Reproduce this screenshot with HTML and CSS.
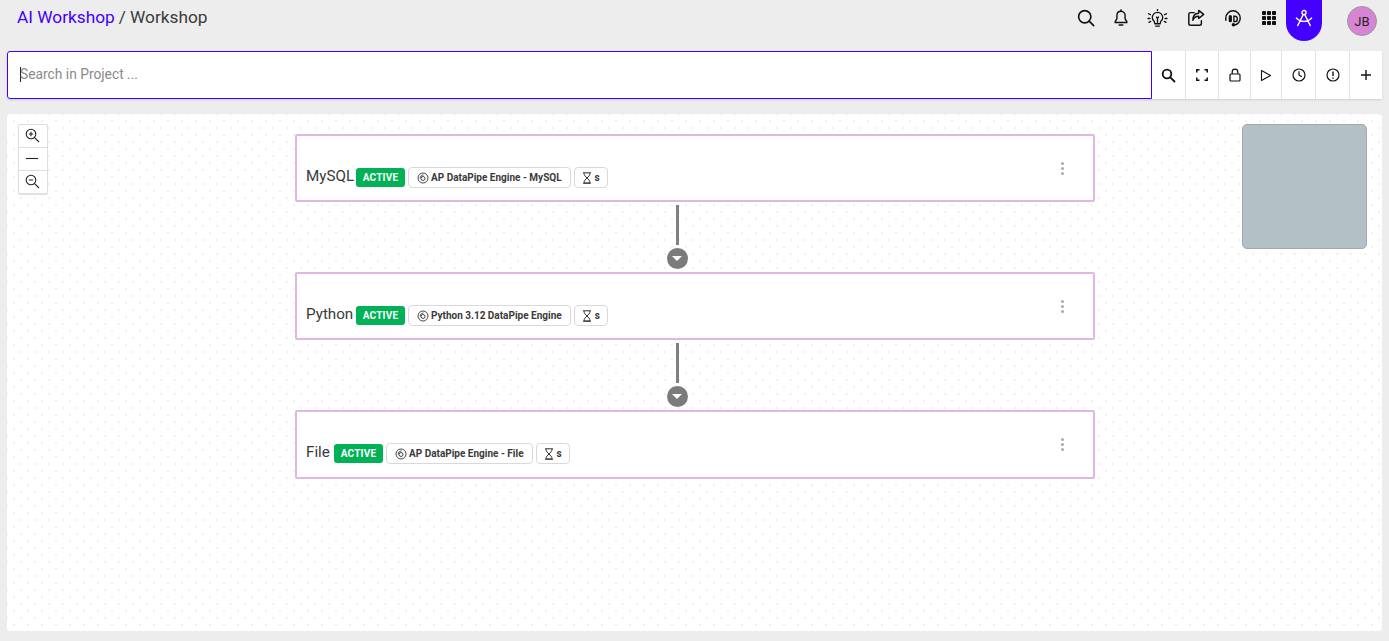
FILE: index.html
```html
<!DOCTYPE html>
<html lang="en">
<head>
<meta charset="utf-8">
<title>AI Workshop</title>
<link rel="stylesheet" href="styles.css">
</head>
<body>
<header class="topbar">
  <div class="crumbs"><a class="crumb-link">AI Workshop</a><span class="crumb-sep">/</span><span>Workshop</span></div>
  <nav class="top-icons">
    <span class="ti ti-search"><svg width="18" height="18" viewBox="0 0 20 20" fill="none" stroke="#111" stroke-width="1.800"><circle cx="8.600" cy="8.600" r="6.800"/><path d="M13.500 13.500l5 5" stroke-linecap="round"/></svg></span>
    <span class="ti ti-bell"><svg width="16" height="18" viewBox="0 0 18 20" fill="none" stroke="#111" stroke-width="1.600"><path d="M9 2.500c-3 0-4.600 2.200-4.600 5v3.500L2.500 14v1h13v-1l-1.900-3V7.500c0-2.800-1.600-5-4.600-5z"/><path d="M9 1v1.500M7 17.800h4" stroke-linecap="round" stroke-width="1.800"/></svg></span>
    <span class="ti ti-bulb"><svg width="21" height="19" viewBox="0 0 22 20" fill="none" stroke="#111" stroke-width="1.400"><path d="M7.500 13c-1.200-1-2-2.400-2-4 0-3 2.400-5.500 5.500-5.500s5.500 2.500 5.500 5.500c0 1.600-.8 3-2 4l-.8 2.500H8.300z"/><path d="M9 18h4M10 8.500l1 1.500 1-1.500M11 10v4M1.500 5l2 1M1 10h2M2 14l1.800-1M20.500 5l-2 1M21 10h-2M20 14l-1.800-1M11 .5v1" stroke-linecap="round"/></svg></span>
    <span class="ti ti-share"><svg width="18" height="18" viewBox="0 0 20 20" fill="none" stroke="#111" stroke-width="1.600"><path d="M8 4H4a2 2 0 0 0-2 2v10a2 2 0 0 0 2 2h10a2 2 0 0 0 2-2v-3" stroke-linecap="round"/><path d="M13 1.500l5.500 4.500-5.500 4.500V8c-3.500 0-5.500 1.500-6.500 4.500 0-4.500 2.500-7.500 6.500-7.700z" stroke-linejoin="round"/></svg></span>
    <span class="ti ti-head"><svg width="18" height="18" viewBox="0 0 20 20" fill="none" stroke="#111" stroke-width="1.600"><path d="M2 13V10a8 8 0 0 1 16 0c0 3.500-1.500 6-5 7.500H11"/><rect x="6" y="7.500" width="2" height="6.500" rx="1" fill="#111"/><path d="M11 8h1.300a2.400 2.400 0 0 1 2.400 2.400v1.200a2.400 2.400 0 0 1-2.400 2.400H11z"/><circle cx="10.500" cy="17.500" r="1.200" fill="#111"/></svg></span>
    <span class="ti ti-grid"><svg width="16" height="16" viewBox="0 0 16 16" fill="#111"><rect x="1" y="1" width="4" height="4" rx=".8"/><rect x="6" y="1" width="4" height="4" rx=".8"/><rect x="11" y="1" width="4" height="4" rx=".8"/><rect x="1" y="6" width="4" height="4" rx=".8"/><rect x="6" y="6" width="4" height="4" rx=".8"/><rect x="11" y="6" width="4" height="4" rx=".8"/><rect x="1" y="11" width="4" height="4" rx=".8"/><rect x="6" y="11" width="4" height="4" rx=".8"/><rect x="11" y="11" width="4" height="4" rx=".8"/></svg></span>
    <span class="ti-active"><svg width="18" height="18" viewBox="0 0 20 20" fill="none" stroke="#fff" stroke-width="1.500"><circle cx="10" cy="4" r="2.300"/><path d="M9 6.500L3 18.500M11 6.500l6 12M1.500 10c2.500 2.800 5.500 3.800 8.500 3.800s6-1 8.500-3.800" stroke-linecap="round"/></svg></span>
    <span class="avatar">JB</span>
  </nav>
</header>

<section class="searchbar">
  <div class="search-field"><span class="caret"></span><span class="placeholder">Search in Project ...</span></div>
  <div class="tool t34"><svg width="15" height="15" viewBox="0 0 15 15" fill="none" stroke="#111" stroke-width="1.800"><circle cx="6" cy="6" r="4.300"/><path d="M9.300 9.300l4.200 4.200" stroke-linecap="round"/></svg></div>
  <div class="tool t33"><svg width="12" height="12" viewBox="0 0 12 12" fill="none" stroke="#111" stroke-width="1.500"><path d="M.8 3.500V.8h2.700M8.500.8h2.700v2.700M11.200 8.500v2.700H8.500M3.500 11.200H.8V8.500"/></svg></div>
  <div class="tool t32"><svg width="14" height="14" viewBox="0 0 14 14" fill="none" stroke="#111" stroke-width="1.200"><rect x="2" y="6" width="10" height="7" rx="1"/><path d="M4.200 6V4a2.800 2.800 0 0 1 5.600 0v2"/></svg></div>
  <div class="tool t31"><svg width="12" height="13" viewBox="0 0 12 13" fill="none" stroke="#111" stroke-width="1.100"><path d="M1.500 1.500l9 5-9 5z" stroke-linejoin="round"/></svg></div>
  <div class="tool t34"><svg width="14" height="14" viewBox="0 0 14 14" fill="none" stroke="#111" stroke-width="1.200"><circle cx="7" cy="7" r="6"/><path d="M7 3.200V7l2.800 1.800"/></svg></div>
  <div class="tool t34"><svg width="14" height="14" viewBox="0 0 14 14" fill="none" stroke="#111" stroke-width="1.200"><circle cx="7" cy="7" r="6"/><path d="M7 3.500v4.500M7 9.600v1.100" stroke-width="1.400"/></svg></div>
  <div class="tool t32 last"><svg width="12" height="12" viewBox="0 0 12 12" fill="none" stroke="#111" stroke-width="1.400"><path d="M6 1v10M1 6h10"/></svg></div>
</section>

<main class="canvas">
  <div class="zoom-ctl">
    <div class="zoom-btn"><svg width="15" height="15" viewBox="0 0 15 15" fill="none" stroke="#222" stroke-width="1.100"><circle cx="6" cy="6" r="4.800"/><path d="M3.800 6h4.400M6 3.800v4.400M9.600 9.600l4.400 4.400"/></svg></div>
    <div class="zoom-btn"><svg width="14" height="3" viewBox="0 0 14 3" stroke="#222" stroke-width="1.100"><path d="M1 1.500h12"/></svg></div>
    <div class="zoom-btn"><svg width="15" height="15" viewBox="0 0 15 15" fill="none" stroke="#222" stroke-width="1.100"><circle cx="6" cy="6" r="4.800"/><path d="M3.800 6h4.400M9.600 9.600l4.400 4.400"/></svg></div>
  </div>
  <div class="minimap"></div>

  <div class="flow">
    <article class="node">
      <div class="node-row">
        <span class="node-name name-wide">MySQL</span>
        <span class="status">ACTIVE</span>
        <span class="pill pill-engine"><svg class="swirl" width="12" height="12" viewBox="0 0 12 12" fill="none" stroke="#333" stroke-width=".9"><circle cx="6" cy="6" r="5"/><circle cx="6" cy="6.500" r="2"/><path d="M3.200 6.500C3.200 4.500 4.500 3 6.500 3"/></svg>AP DataPipe Engine - MySQL</span>
        <span class="pill pill-timer"><svg class="glass" width="10" height="12" viewBox="0 0 10 12" fill="none" stroke="#333" stroke-width="1"><path d="M1 .8h8M1 11.200h8M2 1c0 2.500 1.500 3.500 3 5 1.500-1.500 3-2.500 3-5M2 11c0-2.500 1.500-3.500 3-5 1.500 1.500 3 2.500 3 5z"/></svg>s</span>
      </div>
      <span class="kebab"><i></i><i></i><i></i></span>
    </article>
    <div class="link"><span class="link-line"></span><span class="link-dot"><b></b></span></div>
    <article class="node">
      <div class="node-row">
        <span class="node-name name-wide">Python</span>
        <span class="status">ACTIVE</span>
        <span class="pill pill-engine"><svg class="swirl" width="12" height="12" viewBox="0 0 12 12" fill="none" stroke="#333" stroke-width=".9"><circle cx="6" cy="6" r="5"/><circle cx="6" cy="6.500" r="2"/><path d="M3.200 6.500C3.200 4.500 4.500 3 6.500 3"/></svg>Python 3.12 DataPipe Engine</span>
        <span class="pill pill-timer"><svg class="glass" width="10" height="12" viewBox="0 0 10 12" fill="none" stroke="#333" stroke-width="1"><path d="M1 .8h8M1 11.200h8M2 1c0 2.500 1.500 3.500 3 5 1.500-1.500 3-2.500 3-5M2 11c0-2.500 1.500-3.500 3-5 1.500 1.500 3 2.500 3 5z"/></svg>s</span>
      </div>
      <span class="kebab"><i></i><i></i><i></i></span>
    </article>
    <div class="link"><span class="link-line"></span><span class="link-dot"><b></b></span></div>
    <article class="node">
      <div class="node-row">
        <span class="node-name name-short">File</span>
        <span class="status">ACTIVE</span>
        <span class="pill pill-engine"><svg class="swirl" width="12" height="12" viewBox="0 0 12 12" fill="none" stroke="#333" stroke-width=".9"><circle cx="6" cy="6" r="5"/><circle cx="6" cy="6.500" r="2"/><path d="M3.200 6.500C3.200 4.500 4.500 3 6.500 3"/></svg>AP DataPipe Engine - File</span>
        <span class="pill pill-timer"><svg class="glass" width="10" height="12" viewBox="0 0 10 12" fill="none" stroke="#333" stroke-width="1"><path d="M1 .8h8M1 11.200h8M2 1c0 2.500 1.500 3.500 3 5 1.500-1.500 3-2.500 3-5M2 11c0-2.500 1.500-3.500 3-5 1.500 1.500 3 2.500 3 5z"/></svg>s</span>
      </div>
      <span class="kebab"><i></i><i></i><i></i></span>
    </article>
  </div>
</main>
</body>
</html>
```
FILE: styles.css
```css
* { box-sizing: border-box; }
html, body { margin: 0; height: 100%; }
body {
  background: #ededed;
  font-family: Roboto, "Liberation Sans", sans-serif;
  color: #333;
  overflow: hidden;
}
.topbar {
  height: 51px;
  display: flex;
  justify-content: space-between;
  align-items: flex-start;
}
.crumbs {
  margin: 7px 0 0 17px;
  font-size: 17.300px;
  line-height: 20px;
  display: flex;
  gap: 4px;
  color: #3b3b3b;
}
.crumb-link { color: #4400ff; }
.top-icons { display: flex; align-items: flex-start; }
.ti { display: flex; justify-content: center; margin-top: 9px; }
.ti-search { width: 18px; margin-right: 18px; }
.ti-bell { width: 16px; margin-right: 18px; }
.ti-bulb { width: 21px; margin-right: 19px; }
.ti-share { width: 18px; margin-right: 19px; }
.ti-head { width: 18px; margin-right: 19px; }
.ti-grid { width: 16px; margin-right: 9px; margin-top: 10px; }
.ti-active {
  width: 36px;
  height: 41px;
  background: #4400ff;
  border-radius: 0 0 18px 18px;
  display: flex;
  justify-content: center;
  padding-top: 9px;
}
.avatar {
  width: 30px;
  height: 30px;
  margin: 6px 12px 0 25px;
  border-radius: 50%;
  background: #d884d4;
  border: 1px solid #999;
  font-size: 13px;
  color: #222;
  display: flex;
  align-items: center;
  justify-content: center;
}
.searchbar {
  height: 48px;
  margin: 0 7px;
  display: flex;
  box-shadow: 0 1px 2px rgba(0,0,0,.12);
}
.search-field {
  width: 1145px;
  background: #fff;
  border: 1px solid #4400ff;
  border-radius: 3px 0 0 3px;
  display: flex;
  align-items: center;
  padding: 0 0 2px 12px;
  font-size: 13.800px;
}
.caret { width: 1px; height: 15px; background: #222; }
.placeholder { color: #8a8a8a; margin-left: -1px; }
.tool {
  background: #fff;
  border-right: 1px solid #e2e2e2;
  display: flex;
  align-items: center;
  justify-content: center;
}
.tool.last { border-right: 0; }
.t34 { width: 34px; }
.t33 { width: 33px; }
.t32 { width: 32px; }
.t31 { width: 31px; }
.canvas {
  position: relative;
  height: 517px;
  margin: 15px 7px 0;
  padding-top: 20px;
  background-color: #fff;
  background-image:
    radial-gradient(circle, #f1f1f1 1px, transparent 1.200px),
    radial-gradient(circle, #f1f1f1 1px, transparent 1.200px);
  background-size: 14px 14px;
  background-position: 0 0, 7px 7px;
  border-radius: 3px;
}
.zoom-ctl {
  position: absolute;
  left: 11px;
  top: 10px;
  width: 30px;
  background: #fff;
  border: 1px solid #dedede;
  border-radius: 2px;
  box-shadow: 0 1px 1px rgba(0,0,0,.12);
}
.zoom-btn {
  height: 23px;
  display: flex;
  align-items: center;
  justify-content: center;
  border-bottom: 1px solid #ddd;
  padding: 0 2px 2px 0;
}
.zoom-btn:last-child { border-bottom: 0; height: 22px; }
.minimap {
  position: absolute;
  left: 1235px;
  top: 10px;
  width: 125px;
  height: 125px;
  background: #b3c1c6;
  border: 1px solid #a3a9ac;
  border-radius: 5px;
}
.flow {
  width: 800px;
  margin-left: 288px;
  display: flex;
  flex-direction: column;
}
.node {
  height: 68px;
  background: #fff;
  border: 2px solid #e0b6e2;
  border-radius: 2px;
  display: flex;
  justify-content: space-between;
  align-items: center;
  padding: 0 29px 0 9px;
}
.flow .node:last-child { height: 69px; }
.flow .node:last-child .node-row { margin-bottom: 13px; }
.node-row {
  display: flex;
  align-items: center;
  align-self: flex-end;
  margin-bottom: 12px;
  gap: 3px;
}
.node-name { font-size: 15.200px; color: #3a3a3a; line-height: 20px; position: relative; top: -2px; white-space: nowrap; }
.name-wide { width: 47px; }
.name-short { width: 25px; }
.status {
  background: #00b156;
  color: #fff;
  font-size: 10px;
  font-weight: 700;
  height: 19px;
  width: 49px;
  border-radius: 3px;
  display: flex;
  align-items: center;
  justify-content: center;
  letter-spacing: .2px;
}
.pill {
  height: 21px;
  background: #fff;
  border: 1px solid #d9d9d9;
  border-radius: 4px;
  display: flex;
  align-items: center;
  font-size: 10px;
  font-weight: 700;
  color: #3a3a3a;
  white-space: nowrap;
}
.pill-engine { padding: 0 8px; }
.pill-timer { padding: 0 7px; }
.swirl { margin-right: 2px; }
.glass { margin-right: 3px; }
.kebab { display: flex; flex-direction: column; gap: 2px; }
.kebab i { width: 3px; height: 3px; border-radius: 50%; background: #aaa; display: block; }
.link {
  height: 70px;
  display: flex;
  flex-direction: column;
  align-items: center;
  padding-top: 3px;
  position: relative;
  left: -18px;
}
.link-line { width: 3px; height: 40px; background: #808080; }
.link-dot {
  width: 21px;
  height: 21px;
  margin-top: 3px;
  border-radius: 50%;
  background: #7b7b7b;
  display: flex;
  align-items: center;
  justify-content: center;
}
.link-dot b {
  width: 0;
  height: 0;
  border: 5px solid transparent;
  border-top: 5px solid #fff;
  border-bottom: 0;
}
```
